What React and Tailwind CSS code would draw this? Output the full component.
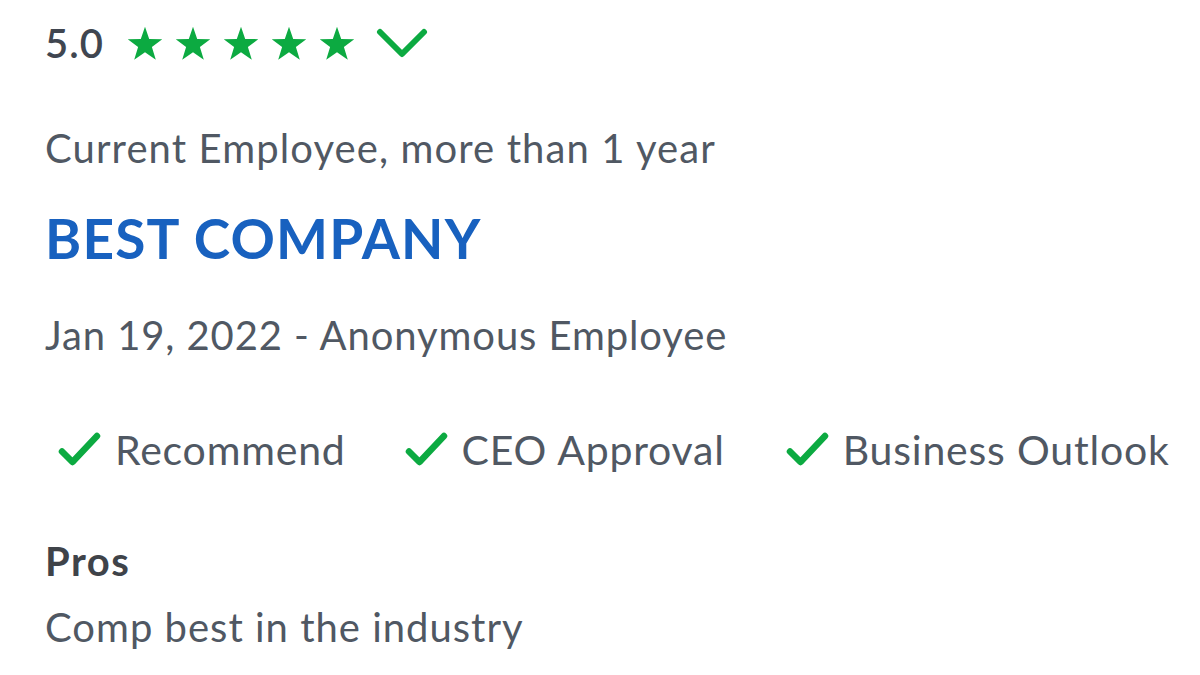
import React from "react";

const Star = () => (
  <svg width="36" height="35" viewBox="0 0 24 23" className="shrink-0">
    <path d="M12 0.3 L14.8 8.5 L23.5 8.6 L16.6 13.9 L19.2 22.3 L12 17.3 L4.8 22.3 L7.4 13.9 L0.5 8.6 L9.2 8.5 Z" fill="#0caa41" />
  </svg>
);

const Check = () => (
  <svg width="43" height="34" viewBox="0 0 43 34" className="shrink-0">
    <path d="M4 19.5 L14.5 30 L39 4" fill="none" stroke="#0caa41" strokeWidth="6.5" strokeLinecap="round" strokeLinejoin="round" />
  </svg>
);

export default function App() {
  return (
    <div
      className="w-[1200px] h-[675px] bg-white overflow-hidden pl-[45px] text-[#505863]"
      style={{ fontFamily: "Lato, 'Open Sans', sans-serif" }}
    >
      <div className="mt-[18px] h-[50px] flex items-center">
        <span className="text-[40px] font-semibold text-[#404650] leading-none tracking-[1px]">5.0</span>
        <div className="flex items-center gap-[12px] ml-[23px]">
          <Star />
          <Star />
          <Star />
          <Star />
          <Star />
        </div>
        <svg width="52" height="32" viewBox="0 0 52 32" className="ml-[21px]">
          <path d="M4 5 L26 27 L48 5" fill="none" stroke="#0caa41" strokeWidth="6" strokeLinecap="round" strokeLinejoin="round" />
        </svg>
      </div>

      <div className="mt-[55px] h-[50px] flex items-center text-[40px] leading-none tracking-[1.1px]">
        Current Employee, more than 1 year
      </div>

      <div className="mt-[35px] h-[60px] flex items-center text-[55px] font-bold leading-none tracking-[1.2px] text-[#1861bf]">
        BEST COMPANY
      </div>

      <div className="mt-[42px] h-[50px] flex items-center text-[40px] leading-none tracking-[0.9px]">
        Jan 19, 2022 - Anonymous Employee
      </div>

      <div className="mt-[64px] h-[50px] flex items-center text-[41px] leading-none tracking-[0.8px] pl-[13px]">
        <div className="flex items-center gap-[14px]">
          <Check />
          <span>Recommend</span>
        </div>
        <div className="flex items-center gap-[14px] ml-[59px]">
          <Check />
          <span>CEO Approval</span>
        </div>
        <div className="flex items-center gap-[14px] ml-[61px]">
          <Check />
          <span>Business Outlook</span>
        </div>
      </div>

      <div className="mt-[62px] h-[50px] flex items-center text-[40px] font-bold leading-none tracking-[1.5px] text-[#3f4349]">
        Pros
      </div>

      <div className="mt-[16px] h-[50px] flex items-center text-[40px] leading-none tracking-[1px]">
        Comp best in the industry
      </div>
    </div>
  );
}
